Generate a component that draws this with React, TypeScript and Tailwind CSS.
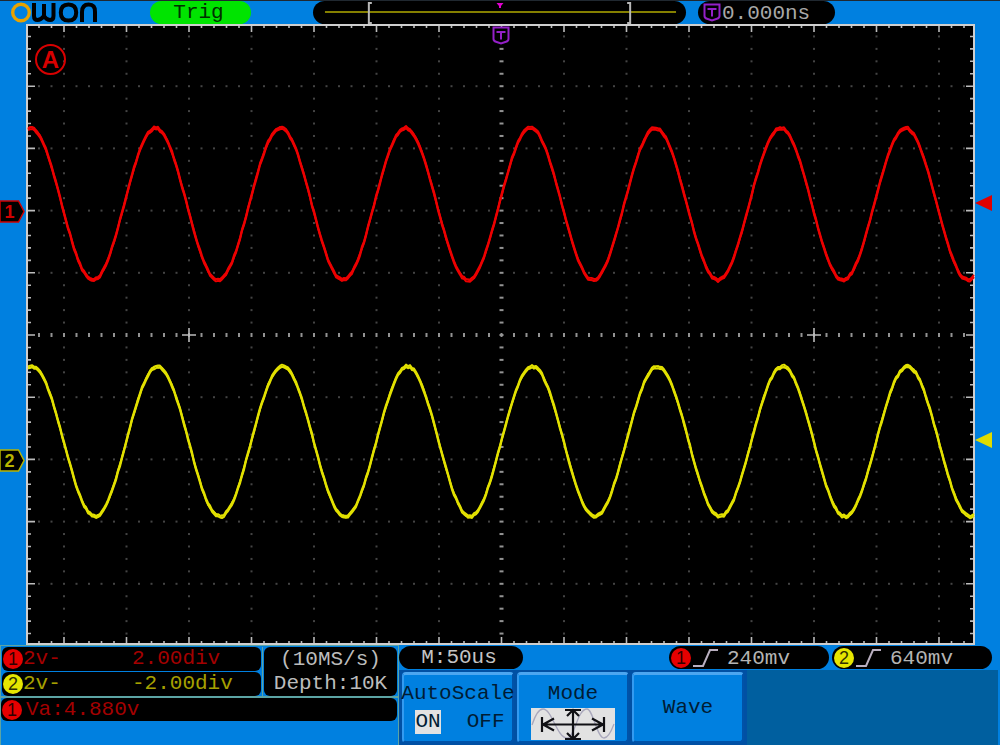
import type { ReactNode } from "react";

const PLOT_W = 949;
const PLOT_H = 621;
const STEP_X = 12.5;
const STEP_Y = 12.44;
const MID_X = 475.5;
const MID_Y = 311;

function range(from: number, to: number): number[] {
  return Array.from({ length: to - from + 1 }, (_, i) => from + i);
}

const COLS = range(-37, 37);
const ROWS = range(-24, 24);

function jitter(i: number, seed: number): number {
  const v = Math.sin(i * 12.9898 + seed * 78.233) * 43758.5453;
  return v - Math.floor(v) - 0.5;
}

function tracePoints(center: number, amp: number, peak: number, offset: number, seed: number): string {
  return range(1, PLOT_W / 2)
    .map((i) => {
      const x = i * 2;
      const y = center - amp * Math.cos(((x - peak) * 2 * Math.PI) / 125) + offset;
      return `${x},${(y + jitter(i, seed) * 2).toFixed(1)}`;
    })
    .join(" ");
}

function Trace(props: { center: number; amp: number; peak: number; color: string; seed: number }) {
  const { center, amp, peak, color, seed } = props;
  return (
    <g fill="none" stroke={color} strokeWidth="1.9" strokeLinejoin="round">
      <polyline points={tracePoints(center, amp, peak, -1.1, seed)} />
      <polyline points={tracePoints(center, amp, peak, 0, seed + 5)} />
      <polyline points={tracePoints(center, amp, peak, 1.1, seed)} />
    </g>
  );
}

function Graticule() {
  const dots: ReactNode[] = [];
  COLS.forEach((c) =>
    ROWS.forEach((r) => {
      if (c === 0 || r === 0 || (c % 5 !== 0 && r % 5 !== 0)) return;
      dots.push(
        <rect key={`${c}/${r}`} x={MID_X + c * STEP_X - 1} y={MID_Y + r * STEP_Y - 1} width="2" height="2" fill="#444444" />,
      );
    }),
  );
  return (
    <g>
      {dots}
      {COLS.map((c) => {
        const x = MID_X + c * STEP_X;
        const len = c % 5 === 0 ? 8 : 4;
        return (
          <g key={c}>
            <rect x={x - 1} y={MID_Y - 2} width="2" height="4" fill="#939393" />
            <path d={`M${x} 0v${len}M${x} ${PLOT_H}v${-len}`} stroke="#bcbcbc" strokeWidth="1.6" />
          </g>
        );
      })}
      {ROWS.map((r) => {
        const y = MID_Y + r * STEP_Y;
        const len = r % 5 === 0 ? 9 : 5;
        return (
          <g key={r}>
            <rect x={MID_X - 2} y={y - 1} width="4" height="2" fill="#939393" />
            <path d={`M0 ${y}h${len}M${PLOT_W} ${y}h${-len}`} stroke="#bcbcbc" strokeWidth="1.6" />
          </g>
        );
      })}
      {[-25, 25].map((c) => (
        <path
          key={c}
          d={`M${MID_X + c * STEP_X - 7} ${MID_Y}h14M${MID_X + c * STEP_X} ${MID_Y - 7}v14`}
          stroke="#bcbcbc"
          strokeWidth="1.6"
        />
      ))}
      <rect x="1" y="1" width={PLOT_W - 2} height={PLOT_H - 2} fill="none" stroke="#cfcfcf" strokeWidth="2" />
    </g>
  );
}

function TriggerShield({ className }: { className: string }) {
  return (
    <svg viewBox="0 0 18 19" className={className} aria-hidden="true">
      <path d="M1.5 1.5h15v11.5q0 2-2.500 2.800L9 17.500l-5-1.700q-2.500-.8-2.500-2.800z" fill="#000" stroke="#9420c8" strokeWidth="2" />
      <path d="M4.500 6h9M9 6v7.500" fill="none" stroke="#9420c8" strokeWidth="2" />
    </svg>
  );
}

function Logo() {
  return (
    <svg viewBox="0 0 90 22" className="h-[22px] w-[90px] shrink-0" role="img" aria-label="OWON">
      <circle cx="12" cy="11.500" r="8.300" fill="none" stroke="#e8a200" strokeWidth="3.400" />
      <g fill="none" stroke="#000" strokeWidth="4">
        <path d="M25 2v13q0 4 3.500 4t6.500-4V3v12q2.500 4 6 4t3.500-4V2" />
        <path d="M59.500 3.500q7.700 0 7.700 8t-7.700 8q-7.700 0-7.700-8t7.700-8z" />
        <path d="M73 21V11q0-7.500 6.700-7.500T86 11v10" />
      </g>
    </svg>
  );
}

function Badge({ n }: { n: 1 | 2 }) {
  return (
    <span
      className={`flex size-5 shrink-0 items-center justify-center rounded-full font-['Liberation_Sans',sans-serif] text-lg leading-5 ${
        n === 1 ? "bg-[#e60000] text-[#300000]" : "bg-[#e6e600] text-[#303000]"
      }`}
    >
      {n}
    </span>
  );
}

function ChannelTag({ n, className }: { n: 1 | 2; className: string }) {
  return (
    <div className={`absolute left-0 h-[23px] w-[25px] ${className}`}>
      <svg viewBox="0 0 25 23" className="absolute inset-0 size-full" aria-hidden="true">
        <path d="M0 1h18.500L24 11.500 18.500 22H0z" fill="#000" stroke="currentColor" strokeWidth="1.500" />
      </svg>
      <span className="relative block w-[19px] text-center font-['Liberation_Sans',sans-serif] text-lg leading-6 font-bold">{n}</span>
    </div>
  );
}

function Level({ className }: { className: string }) {
  return (
    <svg viewBox="0 0 17 16" className={`absolute left-0 h-4 w-[17px] ${className}`} aria-hidden="true">
      <path d="M0 8L17 0v16z" fill="currentColor" />
    </svg>
  );
}

function ChannelRow({ n, scale, offset }: { n: 1 | 2; scale: string; offset: string }) {
  return (
    <div className={`flex h-6 items-center rounded-md bg-black pl-px ${n === 1 ? "text-[#a40000]" : "text-[#a6a000]"}`}>
      <Badge n={n} />
      <span className="w-[109px]">{scale}</span>
      <span>{offset}</span>
    </div>
  );
}

function TriggerPill({ n, value }: { n: 1 | 2; value: string }) {
  return (
    <div className="flex h-[23px] w-40 items-center rounded-full bg-black pl-0.5">
      <Badge n={n} />
      <svg viewBox="0 0 26 18" className="ml-0.5 h-[18px] w-[26px]" aria-label="rising edge" role="img">
        <path d="M0 17h10L17 1h8" fill="none" stroke="#b9afc0" strokeWidth="2" />
      </svg>
      <span className="ml-2 pt-0.5 text-[#b4b4b4]">{value}</span>
    </div>
  );
}

function SoftKey({ children }: { children: ReactNode }) {
  return (
    <button
      type="button"
      className="flex h-[71px] w-[112px] flex-col items-center justify-center rounded-sm border-t-3 border-r-2 border-b-2 border-l-2 border-t-[#4ca6f0] border-r-[#0052a8] border-b-[#0052a8] border-l-[#339af0] bg-[#0080e0] text-[#001c34]"
    >
      {children}
    </button>
  );
}

function ModeIcon() {
  return (
    <svg viewBox="0 0 84 32" className="h-8 w-[84px] bg-[#e2e2e2]" aria-hidden="true">
      <path d="M1 17C5 5 8 1 12 1c9 0 14 29 24 29C44 30 46 1 56 1c6 0 10 29 17 29 4 0 7-6 10-14" fill="none" stroke="#aaa8bc" strokeWidth="1.300" />
      <g fill="none" stroke="#101014" strokeWidth="2.200">
        <path d="M11 9v15M73 9v15M12 16.500h60M23 10.500l-11 6 11 6M61 10.500l11 6-11 6" />
        <path d="M34 2h16M34 31h16M42 2v28M36 8l6-6 6 6M36 25l6 6 6-6" />
      </g>
    </svg>
  );
}

export default function App() {
  return (
    <main className="flex min-h-screen w-full flex-col bg-[#0080e0] font-['Liberation_Mono','Courier_New',monospace] text-[21px] leading-6">
      <header className="flex h-6 items-start border-t border-[#202830] pr-[165px] pl-[9px]">
        <Logo />
        <div className="ml-[51px] flex h-[23px] w-[101px] items-center justify-center rounded-full bg-[#00e400] pr-1 text-[#003000]">
          Trig
        </div>
        <div className="relative ml-[62px] h-[23px] min-w-0 flex-1 rounded-full bg-black">
          <svg viewBox="0 0 374 23" className="block size-full" preserveAspectRatio="none" aria-label="Record position" role="img">
            <path d="M12 11h352" stroke="#858000" strokeWidth="2" />
            <path d="M59 2h-3v20h3M315 2h3v20h-3" fill="none" stroke="#b8b8b8" strokeWidth="2" />
            <path d="M184 2h7l-2.500 3v2h-2V5z" fill="#e000d0" />
          </svg>
        </div>
        <div className="ml-3 flex h-[23px] w-[137px] items-center rounded-full bg-black pl-[5px] text-[#a8a8a8]">
          <TriggerShield className="h-[19px] w-[18px]" />
          <span className="ml-px pt-0.5">0.000ns</span>
        </div>
      </header>

      <section className="flex" aria-label="Waveform display">
        <div className="relative w-[26px] shrink-0">
          <ChannelTag n={1} className="top-[28.400%] text-[#d00000]" />
          <ChannelTag n={2} className="top-[68.500%] text-[#b8b400]" />
        </div>
        <div className="relative min-w-0 flex-1 bg-black">
          <svg viewBox={`0 0 ${PLOT_W} ${PLOT_H}`} className="block h-auto w-full" role="img" aria-label="Two sine traces">
            <Graticule />
            <Trace center={180} amp={76} peak={129.5} color="#ec0000" seed={1} />
            <Trace center={417.5} amp={75} peak={131.5} color="#e2e000" seed={2} />
          </svg>
          <div className="absolute top-5 left-[9px] flex size-[31px] items-center justify-center rounded-full border-2 border-[#d80000] font-['Liberation_Sans',sans-serif] text-2xl leading-7 font-bold text-[#d80000]">
            A
          </div>
          <TriggerShield className="absolute top-0.5 left-1/2 h-[19px] w-[18px] -translate-x-1/2" />
        </div>
        <div className="relative w-[25px] shrink-0">
          <Level className="top-[27.500%] text-[#e00000]" />
          <Level className="top-[65.700%] text-[#e0dc00]" />
        </div>
      </section>

      <footer className="flex flex-1">
        <div className="flex w-[399px] shrink-0 flex-col border-x border-t border-[#5ca4a4] pt-px">
          <div className="flex border-b-2 border-[#5ca4a4]">
            <div className="flex flex-1 flex-col gap-px border-r border-[#5ca4a4] pr-px pl-px">
              <ChannelRow n={1} scale="2v-" offset="2.00div" />
              <ChannelRow n={2} scale="2v-" offset="-2.00div" />
            </div>
            <div className="mx-px flex w-[133px] flex-col items-center justify-center rounded-md bg-black text-[#bcbcbc]">
              <span>(10MS/s)</span>
              <span>Depth:10K</span>
            </div>
          </div>
          <div className="mr-px flex h-[23px] items-center rounded-md bg-black pl-px text-[#a40000]">
            <Badge n={1} />
            <span className="ml-1">Va:4.880v</span>
          </div>
        </div>

        <div className="flex min-w-0 flex-1 flex-col">
          <div className="flex h-[25px] items-center pr-2">
            <div className="flex h-[23px] w-[124px] items-center justify-center rounded-full bg-black pr-1 text-[#c4c4c4]">M:50us</div>
            <div className="ml-auto flex gap-[3px]">
              <TriggerPill n={1} value="240mv" />
              <TriggerPill n={2} value="640mv" />
            </div>
          </div>
          <div className="mr-0.5 flex flex-1 bg-[#005f9f]">
            <nav className="flex items-start gap-[3px] bg-[#0050a4] px-[3px] pt-0.5" aria-label="Soft keys">
              <SoftKey>
                <span>AutoScale</span>
                <span className="mt-1 flex gap-[26px] pl-1">
                  <span className="bg-[#e2e2e2]">ON</span>
                  <span>OFF</span>
                </span>
              </SoftKey>
              <SoftKey>
                <span className="pt-1 leading-7">Mode</span>
                <ModeIcon />
              </SoftKey>
              <SoftKey>
                <span>Wave</span>
              </SoftKey>
            </nav>
          </div>
        </div>
      </footer>
    </main>
  );
}
